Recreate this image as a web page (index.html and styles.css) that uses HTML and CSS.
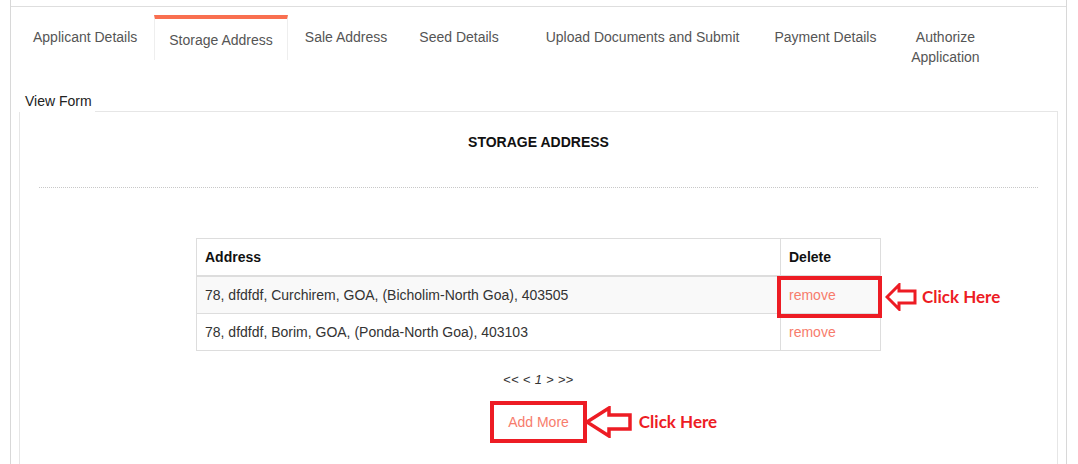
FILE: index.html
```html
<!DOCTYPE html>
<html>
<head>
<title>Storage Address</title>
<link rel="stylesheet" href="styles.css">
</head>
<body>
	<div class="page">
		<div class="page-top"></div>
		<ul class="tabs">
			<li class="tab">Applicant Details</li>
			<li class="tab active">Storage Address</li>
			<li class="tab">Sale Address</li>
			<li class="tab tab-gap">Seed Details</li>
			<li class="tab tab-gap-sm">Upload Documents and Submit</li>
			<li class="tab">Payment Details</li>
			<li class="tab tab-narrow">Authorize Application</li>
		</ul>
		<div class="view-label">View Form</div>
		<div class="panel">
			<h4 class="panel-title">STORAGE ADDRESS</h4>
			<hr class="dotted">
			<div class="table-wrap">
				<table class="addr-table">
					<thead>
						<tr>
							<th>Address</th>
							<th class="col-delete">Delete</th>
						</tr>
					</thead>
					<tbody>
						<tr>
							<td>78, dfdfdf, Curchirem, GOA, (Bicholim-North Goa), 403505</td>
							<td class="col-delete"><a href="#" class="link">remove</a></td>
						</tr>
						<tr>
							<td>78, dfdfdf, Borim, GOA, (Ponda-North Goa), 403103</td>
							<td class="col-delete"><a href="#" class="link">remove</a></td>
						</tr>
					</tbody>
				</table>
				<div class="mark mark-remove"></div>
				<div class="note note-remove">
					<svg width="32" height="28" viewBox="0 0 32 28">
						<polygon points="2,14 14,2 14,8 30,8 30,20 14,20 14,26" fill="#fff" stroke="#ed1c24" stroke-width="3" stroke-linejoin="miter"/>
					</svg>
					<span class="note-text">Click Here</span>
				</div>
			</div>
			<div class="pager">&lt;&lt; &lt; <i>1</i> &gt; &gt;&gt;</div>
			<div class="add-row">
				<div class="mark mark-add">
					<a href="#" class="link">Add More</a>
					<div class="note note-add">
						<svg width="48" height="32" viewBox="0 0 48 32">
							<polygon points="2,16 24,2 24,9 45,9 45,23 24,23 24,30" fill="#fff" stroke="#ed1c24" stroke-width="3.5" stroke-linejoin="miter"/>
						</svg>
						<span class="note-text">Click Here</span>
					</div>
				</div>
			</div>
		</div>
	</div>
</body>
</html>
```

FILE: styles.css
```css
body {
	margin: 0;
	font-family: "Liberation Sans", Arial, sans-serif;
	font-size: 14px;
	line-height: 20px;
	color: #333;
	background: #fff;
}
.page {
	margin-left: 10px;
	width: 1057px;
	height: 520px;
	box-sizing: border-box;
	border-left: 1px solid #d8d8d8;
	border-right: 1px solid #d8d8d8;
}
.page-top {
	height: 6px;
	border-bottom: 1px solid #dedede;
}
.tabs {
	display: flex;
	align-items: flex-start;
	list-style: none;
	margin: 8px 0 0 0;
	padding: 0 0 0 7px;
}
.tab {
	margin-right: 2px;
	padding: 12px 15px 13px;
	color: #555;
	white-space: nowrap;
}
.tab.active {
	border-top: 4px solid #f96f50;
	border-left: 1px solid #eee;
	border-right: 1px solid #eee;
	padding: 11px 14px 10px;
}
.tab-gap {
	margin-right: 17px;
}
.tab-gap-sm {
	margin-right: 5px;
}
.tab-narrow {
	width: 104px;
	box-sizing: border-box;
	text-align: center;
	white-space: normal;
}
.view-label {
	position: relative;
	z-index: 1;
	width: 76px;
	margin: 11px 0 -1px 8px;
	padding: 0 0 1px 6px;
	box-sizing: border-box;
	background: #fff;
	color: #222;
}
.panel {
	margin: 0 8px;
	height: 420px;
	border: 1px solid #e6e6e6;
	padding: 20px 19px 0;
}
.panel-title {
	margin: 0;
	font-size: 14px;
	font-weight: bold;
	text-align: center;
	color: #111;
}
.dotted {
	margin: 35px 0 0;
	border: 0;
	border-top: 1px dotted #c8c8c8;
}
.table-wrap {
	position: relative;
	width: 685px;
	margin: 50px auto 0;
}
.addr-table {
	width: 100%;
	border-collapse: collapse;
}
.addr-table th,
.addr-table td {
	border: 1px solid #ddd;
	padding: 8px;
	text-align: left;
	height: 20px;
}
.addr-table th {
	color: #111;
	border-bottom-width: 2px;
}
.addr-table tbody tr:nth-child(odd) {
	background: #f9f9f9;
}
.col-delete {
	width: 83px;
}
.link {
	color: #f77c6c;
	text-decoration: none;
}
.mark {
	border: 4px solid #ed1c24;
	box-sizing: border-box;
}
.mark-remove {
	position: absolute;
	left: 581px;
	top: 38px;
	width: 105px;
	height: 42px;
}
.note {
	position: absolute;
	display: flex;
	align-items: center;
	gap: 5px;
	white-space: nowrap;
}
.note svg {
	flex-shrink: 0;
}
.note-text {
	font-family: Lato, "Open Sans", sans-serif;
	font-weight: bold;
	font-size: 17px;
	color: #ed1c24;
}
.note-remove {
	left: 689px;
	top: 45px;
	height: 28px;
}
.pager {
	margin-top: 19px;
	text-align: center;
	font-size: 13px;
	letter-spacing: 0.3px;
	color: #333;
}
.add-row {
	display: flex;
	justify-content: center;
	margin-top: 11px;
}
.mark-add {
	position: relative;
	padding: 7px 14px;
}
.note-add {
	left: calc(100% + 2px);
	top: 0;
	height: 100%;
	gap: 6px;
}
```
